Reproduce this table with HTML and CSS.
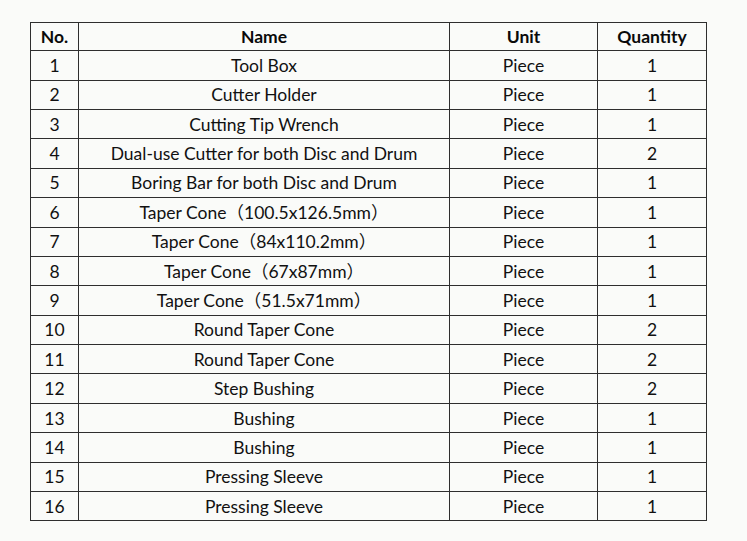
FILE: index.html
```html
<!DOCTYPE html>
<html>
<head>
<meta charset="utf-8">
<link rel="stylesheet" href="styles.css">
</head>
<body>
<table class="parts">
<colgroup><col class="c-no"><col class="c-name"><col class="c-unit"><col class="c-qty"></colgroup>
<thead>
<tr><th>No.</th><th>Name</th><th>Unit</th><th>Quantity</th></tr>
</thead>
<tbody>
<tr><td>1</td><td>Tool Box</td><td>Piece</td><td>1</td></tr>
<tr><td>2</td><td>Cutter Holder</td><td>Piece</td><td>1</td></tr>
<tr><td>3</td><td>Cutting Tip Wrench</td><td>Piece</td><td>1</td></tr>
<tr><td>4</td><td>Dual-use Cutter for both Disc and Drum</td><td>Piece</td><td>2</td></tr>
<tr><td>5</td><td>Boring Bar for both Disc and Drum</td><td>Piece</td><td>1</td></tr>
<tr><td>6</td><td>Taper Cone（100.5x126.5mm）</td><td>Piece</td><td>1</td></tr>
<tr><td>7</td><td>Taper Cone（84x110.2mm）</td><td>Piece</td><td>1</td></tr>
<tr><td>8</td><td>Taper Cone（67x87mm）</td><td>Piece</td><td>1</td></tr>
<tr><td>9</td><td>Taper Cone（51.5x71mm）</td><td>Piece</td><td>1</td></tr>
<tr><td>10</td><td>Round Taper Cone</td><td>Piece</td><td>2</td></tr>
<tr><td>11</td><td>Round Taper Cone</td><td>Piece</td><td>2</td></tr>
<tr><td>12</td><td>Step Bushing</td><td>Piece</td><td>2</td></tr>
<tr><td>13</td><td>Bushing</td><td>Piece</td><td>1</td></tr>
<tr><td>14</td><td>Bushing</td><td>Piece</td><td>1</td></tr>
<tr><td>15</td><td>Pressing Sleeve</td><td>Piece</td><td>1</td></tr>
<tr><td>16</td><td>Pressing Sleeve</td><td>Piece</td><td>1</td></tr>
</tbody>
</table>
</body>
</html>
```
FILE: styles.css
```css
html, body {
  margin: 0;
  padding: 0;
  background: #fafbf9;
}
body {
  padding: 22px 0 0 30px;
  font-family: Lato, "Noto Sans CJK SC", sans-serif;
  color: #111;
}
.parts {
  border-collapse: collapse;
  width: 676px;
  table-layout: fixed;
}
.c-no { width: 48px; }
.c-name { width: 371px; }
.c-unit { width: 148px; }
.c-qty { width: 109px; }
.parts th, .parts td {
  border: 1.5px solid #2e2e2e;
  padding: 0;
  text-align: center;
  font-size: 17.5px;
  line-height: 20px;
  white-space: nowrap;
}
.parts thead tr { height: 28.2px; }
.parts tbody tr { height: 29.4px; }
.parts td { padding-top: 1px; }
.parts th {
  font-weight: 700;
  color: #0a0a0a;
}
```
